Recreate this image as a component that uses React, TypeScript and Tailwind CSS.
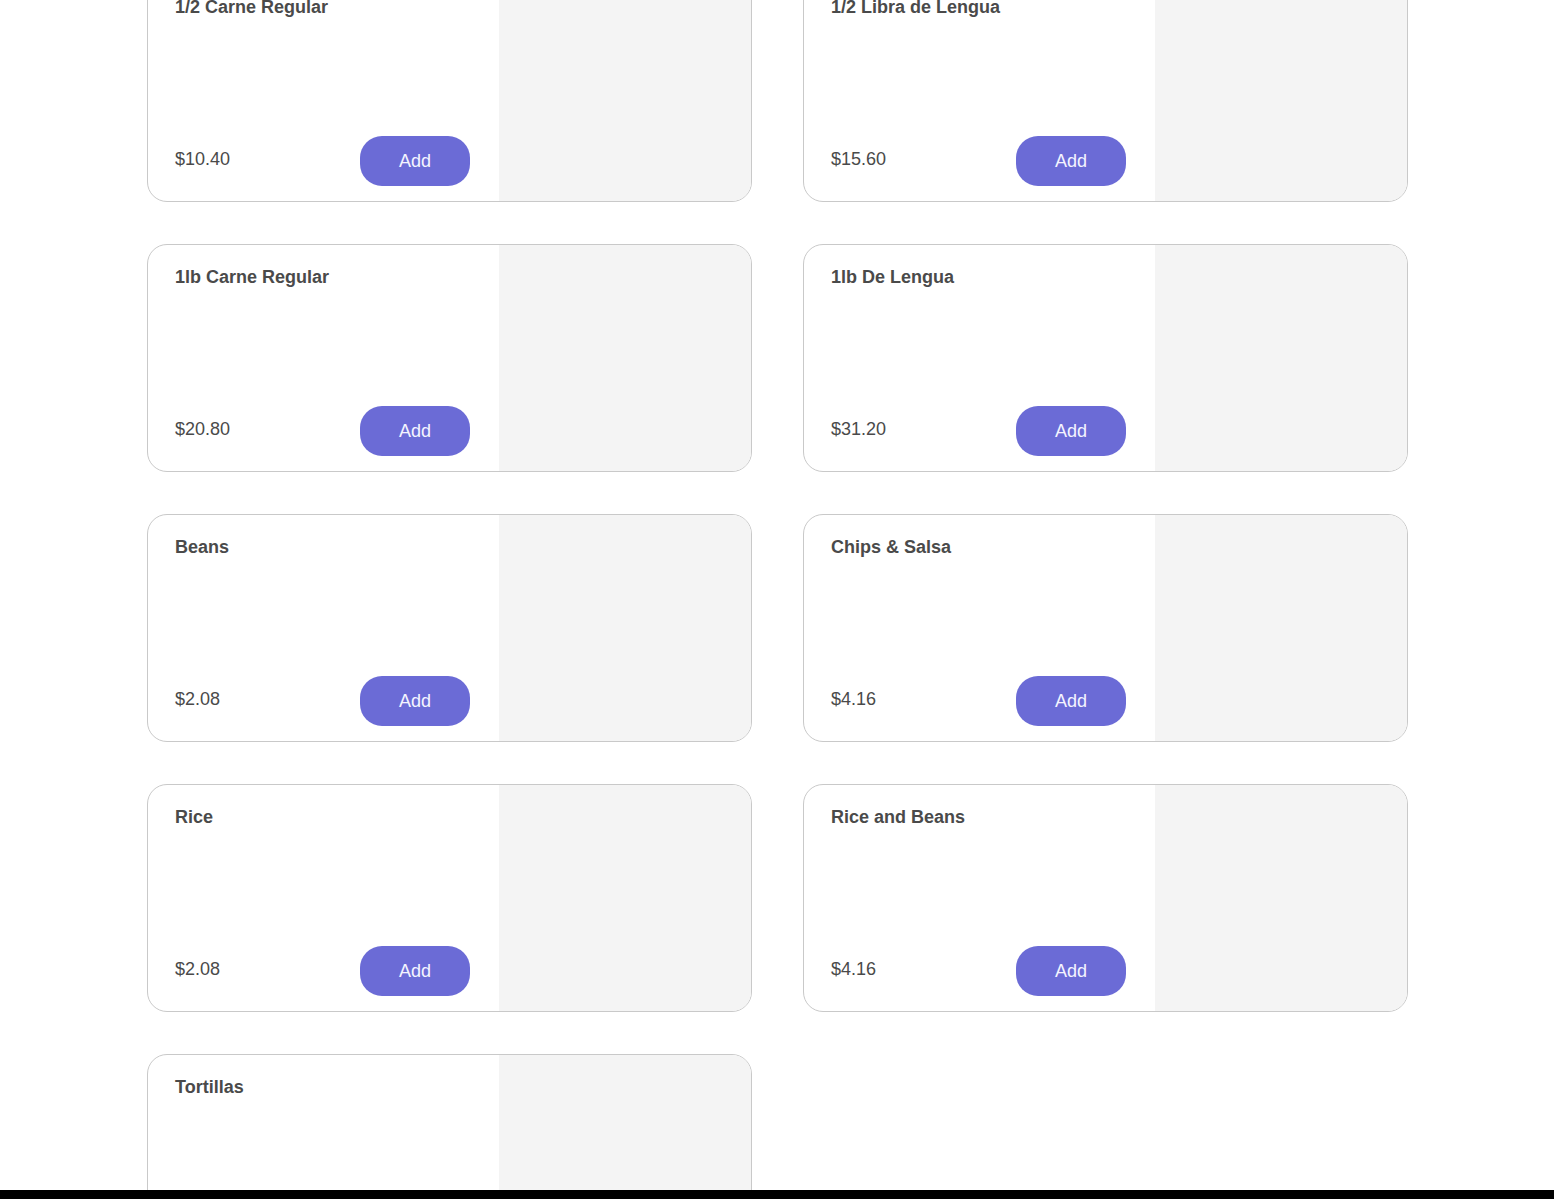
import React from "react";

const items = [
  { name: "1/2 Carne Regular", price: "$10.40" },
  { name: "1/2 Libra de Lengua", price: "$15.60" },
  { name: "1lb Carne Regular", price: "$20.80" },
  { name: "1lb De Lengua", price: "$31.20" },
  { name: "Beans", price: "$2.08" },
  { name: "Chips & Salsa", price: "$4.16" },
  { name: "Rice", price: "$2.08" },
  { name: "Rice and Beans", price: "$4.16" },
  { name: "Tortillas", price: "$2.08" },
];

function Card({ name, price }: { name: string; price: string }) {
  return (
    <div className="flex h-[228px] overflow-hidden rounded-[20px] border border-[#c9c9c9] bg-white">
      <div className="flex flex-1 flex-col justify-between pl-[27px] pr-[29px] pt-[20px] pb-[15px]">
        <div className="text-[18px] font-bold leading-[24px] text-[#4a4a4a]">{name}</div>
        <div className="flex items-center justify-between">
          <span className="mb-[4px] text-[18px] leading-[24px] text-[#4a4a4a]">{price}</span>
          <button className="h-[50px] w-[110px] rounded-[22px] bg-[#6b6bd6] text-[18px] font-light text-[#f4f4ff]">
            Add
          </button>
        </div>
      </div>
      <div className="w-[252px] bg-[#f4f4f4]" />
    </div>
  );
}

export default function App() {
  return (
    <div
      className="flex h-[1199px] w-full flex-col overflow-hidden bg-white"
      style={{ fontFamily: '"Liberation Sans", Arial, sans-serif' }}
    >
      <div className="flex-1 overflow-hidden">
        <div className="ml-[147px] mt-[-26px] grid w-[1261px] grid-cols-[605px_605px] gap-x-[51px] gap-y-[42px]">
          {items.map((it) => (
            <Card key={it.name} name={it.name} price={it.price} />
          ))}
        </div>
      </div>
      <div className="h-[9px] w-full bg-black" />
    </div>
  );
}
